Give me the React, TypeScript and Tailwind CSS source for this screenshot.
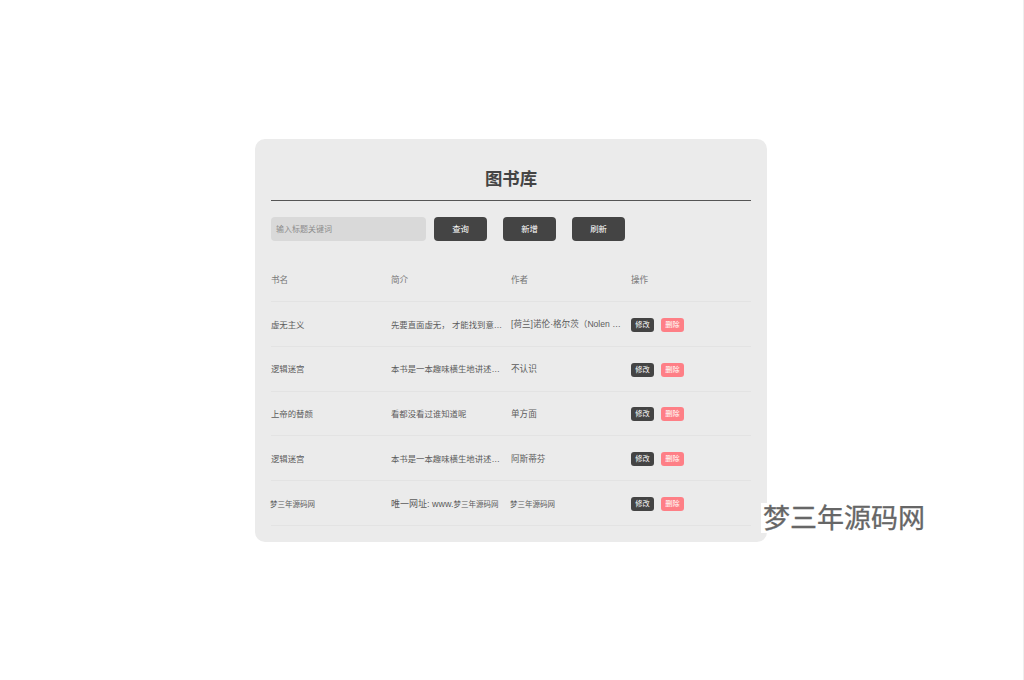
import React from "react";

const cjk = "font-['Liberation_Sans','Noto_Sans_CJK_SC',sans-serif]";

const books = [
  { name: "虚无主义", intro: "先要直面虚无， 才能找到意义的所在", author: "[荷兰]诺伦·格尔茨（Nolen Gertz）" },
  { name: "逻辑迷宫", intro: "本书是一本趣味横生地讲述逻辑学的书", author: "不认识" },
  { name: "上帝的替颜", intro: "看都没看过谁知道呢", author: "单方面" },
  { name: "逻辑迷宫", intro: "本书是一本趣味横生地讲述逻辑学的书", author: "阿斯蒂芬" },
  { name: "梦三年源码网", intro: "唯一网址: www.", introTail: "梦三年源码网", author: "梦三年源码网", small: true },
];

function ToolButton({ label }: { label: string }) {
  return (
    <button className="w-[53px] h-6 rounded bg-[#444444] text-white text-[8.4px] leading-6 text-center">
      {label}
    </button>
  );
}

export default function App() {
  return (
    <div className={`relative h-[680px] w-full overflow-hidden bg-white flex ${cjk}`}>
      <div className="flex-1 min-w-0 flex justify-center pt-[139px] pr-px">
        <div className="w-[512px] h-[403px] rounded-[10px] bg-[#ebebeb] px-4">
          {/* Title */}
          <h1 className="h-[62px] pt-[28px] border-b border-[#555555] text-center text-[17.4px] leading-[25px] font-bold text-[#444444]">
            图书库
          </h1>

          {/* Toolbar */}
          <div className="flex items-center mt-4">
            <input
              placeholder="输入标题关键词"
              className="w-[155px] h-6 rounded bg-[#d9d9d9] px-[5px] text-[8px] outline-none placeholder:text-[#8c8c8c]"
            />
            <div className="ml-[8px] flex gap-4">
              <ToolButton label="查询" />
              <ToolButton label="新增" />
              <ToolButton label="刷新" />
            </div>
          </div>

          {/* Table */}
          <div className="mt-[17px]">
            <div className="grid grid-cols-[120px_120px_120px_120px] h-[44px] pt-[2px] items-center border-b border-[#e3e3e3] text-[8.6px] text-[#777777]">
              <div>书名</div>
              <div>简介</div>
              <div>作者</div>
              <div>操作</div>
            </div>
            {books.map((book, i) => (
              <div
                key={i}
                className="grid grid-cols-[120px_120px_120px_120px] h-[44.8px] pt-[2px] items-center border-b border-[#e3e3e3] text-[8.4px] text-[#5c5c5c]"
              >
                <div className={book.small ? "text-[7.5px] -ml-px pt-px" : ""}>{book.name}</div>
                <div className={book.small ? "truncate pr-2 pt-[2px]" : "truncate pr-2"}>
                  {book.introTail ? <span className="text-[9px]">{book.intro}</span> : book.intro}
                  {book.introTail && <span className="text-[7.5px]">{book.introTail}</span>}
                </div>
                <div className={book.small ? "truncate pr-2 text-[7.5px] -ml-px pt-px" : "truncate pr-2 text-[8.6px]"}>{book.author}</div>
                <div className="flex gap-[7px]">
                  <button className="w-[23px] h-[14px] rounded-[3px] bg-[#444444] text-white text-[7.2px] leading-[14px]">修改</button>
                  <button className="w-[23px] h-[14px] rounded-[3px] bg-[#fe7f86] text-white text-[7.2px] leading-[14px]">删除</button>
                </div>
              </div>
            ))}
          </div>
        </div>
      </div>
      <div className="w-px h-full bg-[#eeeeee]" />

      {/* Watermark */}
      <div className="absolute left-[761px] top-[503px] w-[166px] h-[30px] bg-white text-[27px] leading-[33px] text-[#666666] whitespace-nowrap overflow-hidden [-webkit-text-stroke:0.3px_#666666]">
        <span className="ml-[2px]">梦三年源码网</span>
      </div>
    </div>
  );
}
